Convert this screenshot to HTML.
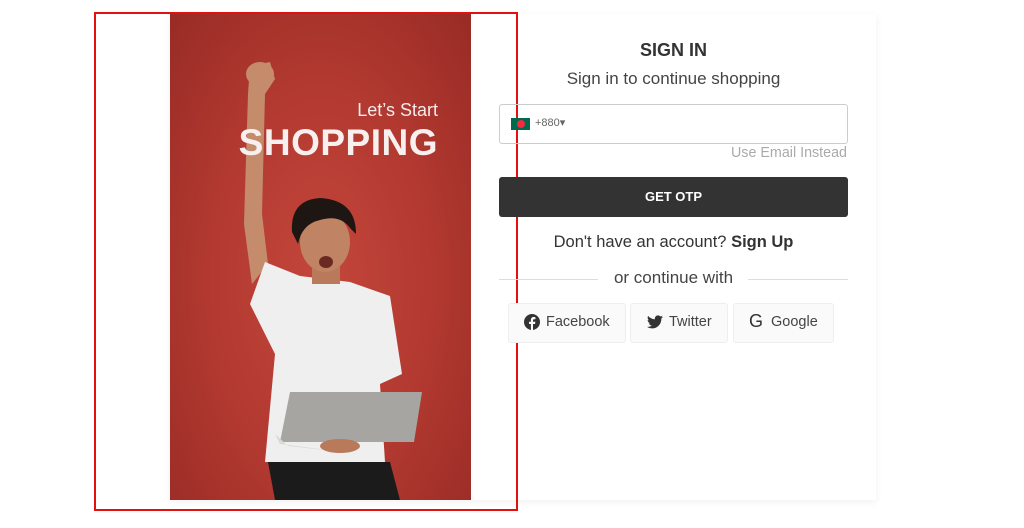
<!DOCTYPE html>
<html><head><meta charset="utf-8"><style>
body{margin:0;width:1024px;height:528px;background:#fff;position:relative;overflow:hidden;font-family:"Liberation Sans",sans-serif;color:#333}
.card{position:absolute;left:170px;top:14px;width:706px;height:486px;background:#fff;box-shadow:0 2px 8px rgba(0,0,0,.06)}
.img{position:absolute;left:170px;top:14px;width:301px;height:486px;background:radial-gradient(ellipse at 50% 55%,#c4463b 0%,#b33a31 50%,#982b25 100%)}
.frame{position:absolute;left:94px;top:12px;width:420px;height:495px;border:2px solid #e31010}
.t{position:absolute;white-space:nowrap}
</style></head><body>
<div class="card"></div>
<div class="img">
<svg width="301" height="486" viewBox="0 0 301 486">
 <path d="M80 52 L100 48 L105 65 L95 80 L92 200 L98 250 L82 270 L74 210 L78 80 Z" fill="#c58c6c"/>
 <ellipse cx="90" cy="60" rx="14" ry="12" fill="#c58c6c"/>
 <path d="M95 248 L130 262 L180 268 L220 282 L232 360 L210 370 L215 448 L95 448 L105 340 L80 290 Z" fill="#efefef"/>
 <path d="M98 448 L220 448 L230 486 L105 486 Z" fill="#1b1b1b"/>
 <rect x="142" y="240" width="28" height="30" fill="#b87a5a"/>
 <ellipse cx="155" cy="228" rx="25" ry="30" fill="#c08363"/>
 <path d="M122 218 Q120 186 150 184 Q186 186 186 220 L180 214 Q170 200 150 206 Q132 210 128 230 Z" fill="#1e1612"/>
 <ellipse cx="156" cy="248" rx="7" ry="6" fill="#6a2a22"/>
 <path d="M120 378 L252 378 L244 428 L110 428 Z" fill="#a7a5a2"/>
 <path d="M105 420 L118 432 L190 440 L110 430 Z" fill="#d9d9d9"/>
 <ellipse cx="170" cy="432" rx="20" ry="7" fill="#b87a5a"/>
</svg>
<div class="t" style="right:33px;top:86px;color:#f5ecea;font-size:18px">Let’s Start</div>
<div class="t" style="right:33px;top:108px;color:#f7f0ee;font-size:37px;font-weight:bold;letter-spacing:.5px">SHOPPING</div>
</div>
<div class="frame"></div>
<div class="t" style="left:499px;width:349px;text-align:center;top:40px;font-size:18px;font-weight:bold;color:#333">SIGN IN</div>
<div class="t" style="left:499px;width:349px;text-align:center;top:69px;font-size:17px;color:#444">Sign in to continue shopping</div>
<div style="position:absolute;left:499px;top:104px;width:347px;height:38px;border:1px solid #ccc;border-radius:3px"></div>
<div style="position:absolute;left:511px;top:118px;width:19px;height:12px;background:#006a4e"><div style="position:absolute;left:6px;top:2px;width:8px;height:8px;border-radius:50%;background:#f42a41"></div></div>
<div class="t" style="left:535px;top:116px;font-size:11px;color:#666">+880▾</div>
<div class="t" style="right:177px;top:145px;font-size:14.3px;color:#aaa">Use Email Instead</div>
<div style="position:absolute;left:499px;top:177px;width:349px;height:40px;background:#333;border-radius:3px;color:#fff;font-size:13px;font-weight:bold;text-align:center;line-height:40px">GET OTP</div>
<div class="t" style="left:499px;width:349px;text-align:center;top:233px;font-size:16.5px;color:#333">Don't have an account? <b>Sign Up</b></div>
<div style="position:absolute;left:499px;top:279px;width:99px;height:1px;background:#ddd"></div>
<div style="position:absolute;left:748px;top:279px;width:100px;height:1px;background:#ddd"></div>
<div class="t" style="left:499px;width:349px;text-align:center;top:268px;font-size:17px;color:#444">or continue with</div>
<div style="position:absolute;left:508px;top:303px;width:116px;height:38px;border:1px solid #eee;background:#fafafa;border-radius:3px"></div>
<div style="position:absolute;left:630px;top:303px;width:96px;height:38px;border:1px solid #eee;background:#fafafa;border-radius:3px"></div>
<div style="position:absolute;left:733px;top:303px;width:99px;height:38px;border:1px solid #eee;background:#fafafa;border-radius:3px"></div>
<svg style="position:absolute;left:524px;top:314px" width="16" height="16" viewBox="0 0 16 16"><circle cx="8" cy="8" r="8" fill="#333"/><path d="M9 16V10h2l.4-2.3H9V6.3c0-.7.3-1.1 1.2-1.1h1.2V3.2C11 3.1 10.4 3 9.8 3 8.1 3 6.9 4 6.9 5.9v1.8H5V10h1.9v6z" fill="#fafafa"/></svg>
<div class="t" style="left:546px;top:314px;font-size:14.5px;color:#444">Facebook</div>
<svg style="position:absolute;left:647px;top:315px" width="16" height="14" viewBox="0 0 24 20"><path d="M24 2.4c-.9.4-1.8.6-2.8.8 1-.6 1.8-1.6 2.2-2.7-1 .6-2 1-3.1 1.2C19.3.7 18 0 16.6 0c-2.7 0-4.9 2.2-4.9 4.9 0 .4 0 .8.1 1.1C7.7 5.8 4.1 3.9 1.7.9c-.4.7-.7 1.6-.7 2.5 0 1.7.9 3.2 2.2 4.1-.8 0-1.6-.2-2.2-.6v.1c0 2.4 1.7 4.4 3.9 4.8-.4.1-.8.2-1.300.2-.3 0-.6 0-.9-.1.6 2 2.4 3.4 4.6 3.4-1.7 1.3-3.800 2.1-6.1 2.1H0c2.2 1.4 4.8 2.2 7.5 2.2 9.1 0 14-7.5 14-14v-.6c1-.7 1.8-1.6 2.5-2.6z" fill="#333"/></svg>
<div class="t" style="left:669px;top:314px;font-size:14.5px;color:#444">Twitter</div>
<div class="t" style="left:749px;top:311px;font-size:18px;color:#333">G</div>
<div class="t" style="left:771px;top:314px;font-size:14.5px;color:#444">Google</div>
</body></html>
